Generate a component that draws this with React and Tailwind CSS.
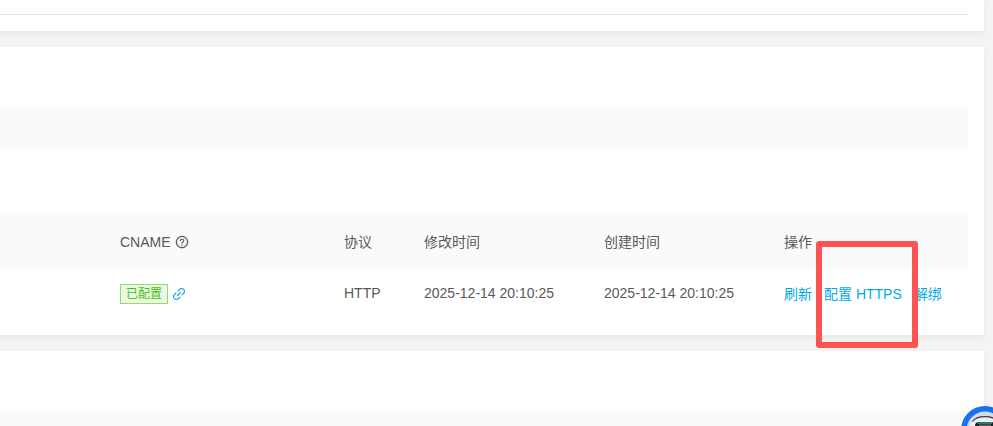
import { AiOutlineLink, AiOutlineQuestionCircle } from "react-icons/ai";

const domains = [
  {
    id: 1,
    cname: "已配置",
    protocol: "HTTP",
    updatedAt: "2025-12-14 20:10:25",
    createdAt: "2025-12-14 20:10:25",
  },
];

function Card({ className = "", children }) {
  return (
    <section
      className={`bg-white pr-4 shadow-[0_2px_6px_rgba(0,0,0,0.06)] ${className}`}
    >
      {children}
    </section>
  );
}

function DomainTable() {
  return (
    <table className="w-full table-fixed text-left text-sm leading-[22px] text-[#595959]">
      <colgroup>
        <col className="w-30" />
        <col className="w-56" />
        <col className="w-20" />
        <col className="w-[180px]" />
        <col className="w-[180px]" />
        <col />
      </colgroup>
      <thead className="bg-[#fafafa]">
        <tr>
          <th />
          <th className="px-4 py-4 font-normal">
            <span className="flex items-center gap-1">
              CNAME
              <AiOutlineQuestionCircle className="size-3.5" strokeWidth="16" />
            </span>
          </th>
          <th className="px-4 py-4 font-normal">协议</th>
          <th className="px-4 py-4 font-normal">修改时间</th>
          <th className="px-4 py-4 font-normal">创建时间</th>
          <th className="px-4 py-4 font-normal">操作</th>
        </tr>
      </thead>
      <tbody>
        {domains.map((domain) => (
          <tr key={domain.id} className="align-top">
            <td />
            <td className="px-4 py-3.5">
              <span className="flex h-[22px] items-center gap-[3px]">
                <span className="border border-[#95de64] bg-[#ebf8e6] px-[5px] text-xs leading-[18px] text-[#49c10f]">
                  {domain.cname}
                </span>
                <button type="button" aria-label="CNAME" className="text-[#00a4dc]">
                  <AiOutlineLink className="size-4" />
                </button>
              </span>
            </td>
            <td className="px-4 py-3.5 leading-5">{domain.protocol}</td>
            <td className="px-4 py-3.5 leading-5">{domain.updatedAt}</td>
            <td className="px-4 py-3.5 leading-5">{domain.createdAt}</td>
            <td className="px-4 py-3.5">
              <div className="flex gap-3 whitespace-nowrap text-[#00aae7]">
                <a href="#refresh">刷新</a>
                <a href="#https" className="relative">
                  配置 HTTPS
                  {/* highlight frame */}
                  <span className="pointer-events-none absolute -top-[42px] -left-2 h-[107px] w-[102px] rounded-[3px] border-6 border-[#ff5252]" />
                </a>
                <a href="#unbind">解绑</a>
              </div>
            </td>
          </tr>
        ))}
      </tbody>
    </table>
  );
}

function AssistantButton() {
  return (
    <button
      type="button"
      aria-label="助手"
      className="fixed -right-4 -bottom-7 size-12"
    >
      <svg viewBox="0 0 48 48" className="size-full">
        <circle cx="24" cy="24" r="24" fill="#1572f3" />
        <circle cx="24" cy="24" r="18.500" fill="#d5dbe6" />
        <path d="M8 22C10 7 38 7 40 22L36 25H12Z" fill="#eceef2" />
        <path
          d="M11.500 15.500C16 9 32 9 36.500 15.500"
          fill="none"
          stroke="#343b49"
          strokeWidth="1.200"
        />
        <rect x="14" y="16" width="20" height="15" rx="4" fill="#17272d" />
        <path d="M17 17H31" stroke="#43c6bd" strokeWidth="1" />
        <path d="M18 19.500H30" stroke="#6b5951" strokeWidth="2" />
      </svg>
    </button>
  );
}

export default function App() {
  return (
    <main className="-ml-4 flex h-screen flex-col gap-4 overflow-hidden bg-[#f4f4f4] pr-[9px] font-['Liberation_Sans','Noto_Sans_CJK_SC',sans-serif]">
      <Card className="pt-3.5 pb-4">
        <hr className="border-[#e4e4e4]" />
      </Card>

      <Card className="pt-15 pb-4">
        <div className="mb-16 h-11 bg-[#fafafa]" />
        <DomainTable />
      </Card>

      <Card className="flex-1 pt-15">
        <div className="h-full bg-[#fafafa]" />
      </Card>

      <AssistantButton />
    </main>
  );
}
